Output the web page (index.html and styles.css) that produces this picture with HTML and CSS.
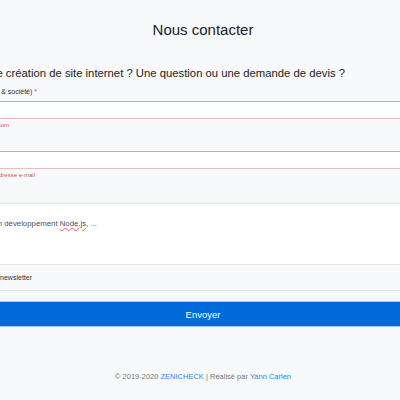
FILE: index.html
```html
<!DOCTYPE html>
<html lang="fr">
<head>
<meta charset="utf-8">
<title>Nous contacter</title>
<link rel="stylesheet" href="styles.css">
</head>
<body>
<main class="page">
  <h1 class="title">Nous contacter</h1>
  <p class="lead">Un projet de création de site internet ? Une question ou une demande de devis ?</p>
  <form class="form">
    <div class="group">
      <label class="label label-name">Nom complet (prénom &amp; société)&nbsp;<span class="req">*</span></label>
      <div class="input invalid"></div>
      <div class="error error-name">Veuillez saisir votre nom</div>
    </div>
    <div class="group">
      <label class="label label-mail">Email&nbsp;<span class="req">*</span></label>
      <div class="input invalid"></div>
      <div class="error error-mail">Veuillez saisir une adresse e-mail</div>
    </div>
    <div class="group">
      <label class="label label-msg">Message</label>
      <div class="textarea">
        <div class="textarea-text">Exemple : un site vitrine, une application en développement&nbsp;<span class="spell">Node.js</span>, ...</div>
      </div>
      <div class="check">
        <div class="check-text">Je souhaite m'inscrire à la newsletter</div>
      </div>
    </div>
    <button type="button" class="btn">Envoyer</button>
  </form>
  <footer class="footer">© 2019-2020 <a class="link">ZENICHECK</a> | Réalisé par <a class="link">Yann Carlen</a></footer>
</main>
</body>
</html>
```
FILE: styles.css
```css
html, body {
  margin: 0;
  padding: 0;
  background: #f8f9fa;
  overflow: hidden;
  width: 400px;
  height: 400px;
}
body {
  font-family: "Liberation Sans", Arial, sans-serif;
  color: #212529;
}
.page {
  width: 406px;
  display: flex;
  flex-direction: column;
}
.title {
  margin: 20px 0 0;
  height: 20px;
  line-height: 20px;
  font-size: 15px;
  font-weight: 400;
  text-align: center;
  color: #222;
}
.lead {
  margin: 26px 0 0;
  width: 345px;
  display: flex;
  justify-content: flex-end;
  height: 14px;
  line-height: 14px;
  font-size: 11.3px;
  color: #222;
  white-space: nowrap;
}
.form {
  margin-top: 7px;
  display: flex;
  flex-direction: column;
}
.group {
  display: flex;
  flex-direction: column;
}
.label {
  display: flex;
  justify-content: flex-end;
  font-size: 7px;
  height: 10px;
  line-height: 10px;
  color: #333;
  white-space: nowrap;
  margin-bottom: 4px;
}
.label-name { width: 37px; }
.label-mail { width: 0; color: transparent; }
.label-msg { width: 0; color: transparent; margin-bottom: 6px; }
.req { color: #dc3545; }
.input {
  height: 16px;
  background: #fff;
  border-top: 1px solid #ced4da;
  border-bottom: 1px solid #ced4da;
}
.input.invalid {
  border-top-color: #dba3a9;
  border-bottom-color: #ebbdc2;
}
.error {
  display: flex;
  justify-content: flex-end;
  margin-top: 1px;
  font-size: 6px;
  height: 10px;
  line-height: 10px;
  color: #d9534f;
  white-space: nowrap;
  margin-bottom: 7px;
}
.error-name { width: 9px; }
.error-mail { width: 35px; }
.textarea {
  height: 62px;
  background: #fff;
  border-top: 1px solid #e1e4e8;
  border-bottom: 1px solid #e1e4e8;
  box-sizing: border-box;
  padding-top: 15px;
}
.textarea-text {
  display: flex;
  justify-content: flex-end;
  width: 97px;
  height: 10px;
  line-height: 10px;
  font-size: 7.8px;
  color: #495057;
  white-space: nowrap;
}
.spell {
  text-decoration: underline wavy #e0606a;
  text-decoration-thickness: 1px;
  text-underline-offset: 1px;
}
.check {
  height: 26px;
  display: flex;
  align-items: center;
  border-bottom: 1px solid #e1e4e8;
  box-sizing: border-box;
}
.check-text {
  display: flex;
  justify-content: flex-end;
  width: 32px;
  font-size: 7px;
  color: #333;
  white-space: nowrap;
}
.btn {
  margin-top: 11px;
  height: 24px;
  border: none;
  padding: 0;
  background: #006ad8;
  color: #fff;
  font-family: "Liberation Sans", Arial, sans-serif;
  font-size: 9.5px;
  box-shadow: 0 0 0 1px #a6cdf3;
}
.footer {
  margin-top: 46px;
  height: 10px;
  line-height: 10px;
  text-align: center;
  font-size: 7.5px;
  color: #777;
}
.link { color: #2c87e6; text-decoration: none; }
```
